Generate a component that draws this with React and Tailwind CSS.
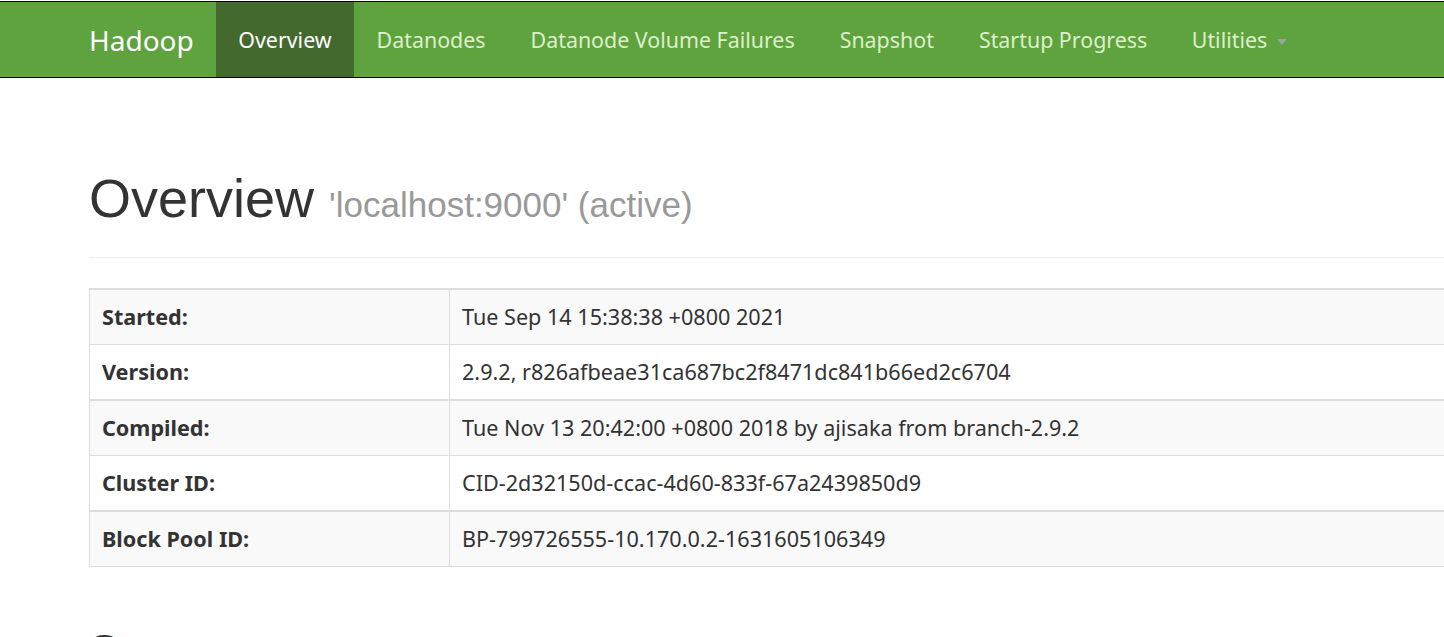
const navItems = [
  { label: "Overview", active: true },
  { label: "Datanodes" },
  { label: "Datanode Volume Failures" },
  { label: "Snapshot" },
  { label: "Startup Progress" },
];

// rows are grouped the way the page's tbodies are: a 2px rule above each group
const groups = [
  [
    ["Started:", "Tue Sep 14 15:38:38 +0800 2021"],
    ["Version:", "2.9.2, r826afbeae31ca687bc2f8471dc841b66ed2c6704"],
  ],
  [
    ["Compiled:", "Tue Nov 13 20:42:00 +0800 2018 by ajisaka from branch-2.9.2"],
    ["Cluster ID:", "CID-2d32150d-ccac-4d60-833f-67a2439850d9"],
  ],
  [["Block Pool ID:", "BP-799726555-10.170.0.2-1631605106349"]],
];

const NavBar = () => {
  return (
    <nav className="mt-px border-y border-black bg-[#5fa33e] h-[77px] flex items-stretch font-['Noto_Sans',sans-serif]">
      <a className="pl-[89px] pr-[22px] flex items-center text-[28px] text-white">Hadoop</a>
      <ul className="flex items-stretch">
        {navItems.map((item) => (
          <li
            key={item.label}
            className={
              item.active
                ? "px-[22.5px] pt-px flex items-center bg-[#44692f] text-white text-[21.4px]"
                : "px-[22.5px] pt-px flex items-center text-[#dcefca] text-[21.4px]"
            }
          >
            {item.label}
          </li>
        ))}
        <li className="px-[22px] pt-px flex items-center text-[#dcefca] text-[21.4px]">
          Utilities
          <span className="ml-[10px] mt-[3px] w-0 h-0 border-x-[5px] border-x-transparent border-t-[6px] border-t-[#9aa39a]" />
        </li>
      </ul>
    </nav>
  );
};

const InfoTable = () => {
  return (
    <div className="w-[1400px] border-b border-[#dddddd] font-['Noto_Sans',sans-serif] text-[21.6px] leading-[30px] text-[#333333]">
      {groups.map((rows, gi) => (
        <div key={gi} className="border-t-2 border-[#dddddd]">
          {rows.map(([label, value], ri) => (
            <div
              key={label}
              className={
                (ri === 0 ? "bg-[#f9f9f9] " : "bg-white border-t border-[#dddddd] ") +
                "flex border-l border-[#dddddd]"
              }
            >
              <div className="w-[360px] shrink-0 border-r border-[#dddddd] py-3 pl-3 font-bold">
                {label}
              </div>
              <div className="py-3 pl-3">{value}</div>
            </div>
          ))}
        </div>
      ))}
    </div>
  );
};

export default function App() {
  return (
    <div className="min-h-screen bg-white overflow-hidden">
      <NavBar />

      <div className="pl-[89px]">
        {/* Page header */}
        <div className="border-b border-[#eeeeee] pb-[29px] mt-[91px]">
          <h1 className="font-['Liberation_Sans',Arial,sans-serif] text-[54px] leading-[59px] text-[#333333] whitespace-nowrap">
            Overview{" "}
            <small className="text-[35px] leading-none text-[#999999]">'localhost:9000' (active)</small>
          </h1>
        </div>

        <div className="mt-[30px]">
          <InfoTable />
        </div>

        <h2 className="mt-[59px] font-['Liberation_Sans',Arial,sans-serif] text-[45px] leading-[50px] text-[#333333]">
          Summary
        </h2>
      </div>
    </div>
  );
}
